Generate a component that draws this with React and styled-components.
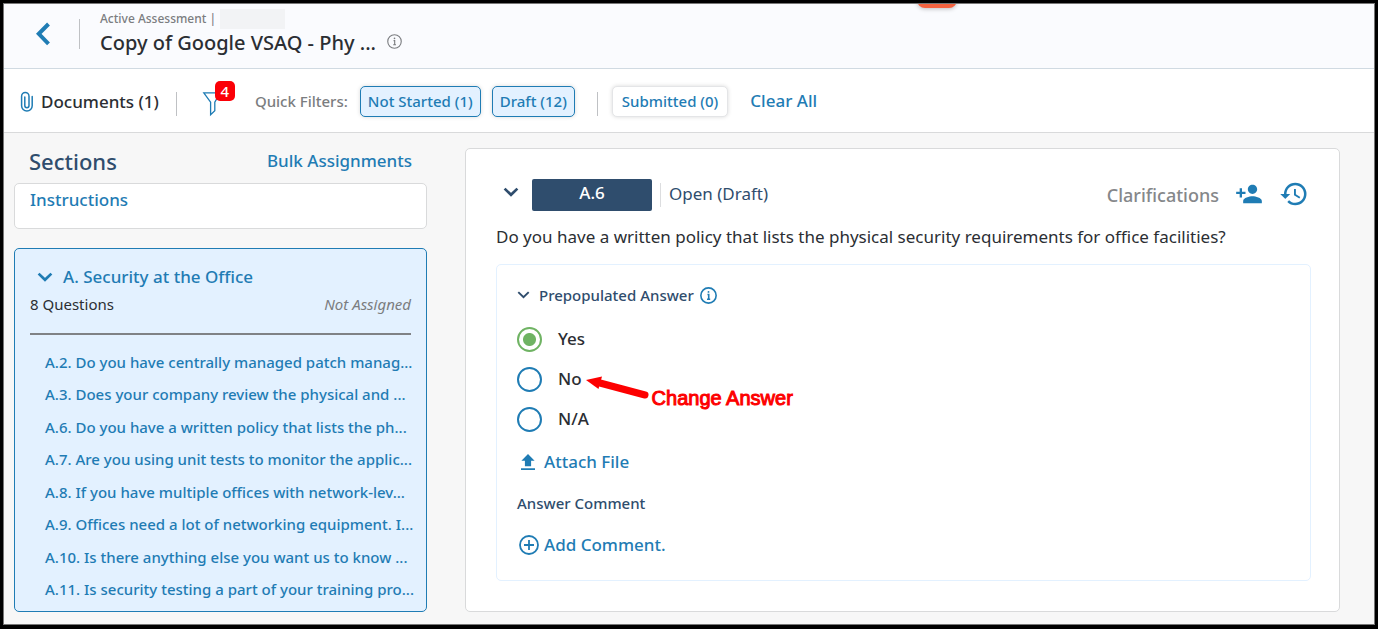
import { useState } from "react";
import { MdHistory, MdPersonAdd } from "react-icons/md";
import styled, { createGlobalStyle } from "styled-components";

const GlobalStyle = createGlobalStyle`
  :root {
    --color-link: #1f7cb4;
    --color-navy: #2f4d6d;
    --color-text: #2b2e33;
    --color-gray: #7b7d80;
    --color-line: #d9dadb;
    --color-selected: #e3f1ff;
  }

  * {
    box-sizing: border-box;
  }

  body {
    margin: 0;
    font-family: "Noto Sans", "Open Sans", sans-serif;
    color: var(--color-text);
  }

  h1, h2, h3, p, ul, fieldset {
    margin: 0;
    padding: 0;
    border: none;
  }

  button {
    font-family: inherit;
    margin: 0;
    padding: 0;
    border: none;
    background: none;
    cursor: pointer;
  }

  a {
    color: var(--color-link);
    text-decoration: none;
  }

  svg {
    display: block;
    flex: none;
    overflow: visible;
  }
`;

// Frame
const Frame = styled.div`
  min-height: 100vh;
  display: flex;
  border: 3px solid #000;
  border-bottom-width: 4px;
`;

const Page = styled.div`
  position: relative;
  flex: 1;
  min-width: 0;
  display: flex;
  flex-direction: column;
  border: 1px solid #777;
  background-color: #f7f7f7;
  overflow: hidden;
`;

const TopTab = styled.div`
  position: absolute;
  top: -16px;
  left: calc(67% - 5px);
  width: 40px;
  height: 20px;
  border-radius: 8px;
  background-color: #f4623f;
  box-shadow: 0 1px 4px rgba(0, 0, 0, 0.25);
`;

// Header
const Header = styled.header`
  display: flex;
  align-items: center;
  height: 65px;
  padding: 0 31px 4px;
  border-bottom: 1px solid #d0dae2;
  background-color: #fafbfe;
`;

const BackButton = styled.button`
  display: flex;
  color: var(--color-link);
`;

const Divider = styled.span`
  flex: none;
  width: 1px;
  height: ${({ $height }) => $height || 24}px;
  margin: ${({ $margin }) => $margin || "0"};
  background-color: ${({ $light }) => ($light ? "#dcdddf" : "#bfc1c4")};
`;

const Heading = styled.div`
  display: flex;
  flex-direction: column;
  padding-bottom: 2px;
`;

const Eyebrow = styled.div`
  display: flex;
  align-items: center;
  gap: 4px;
  height: 20px;
  font-size: 12px;
  line-height: 20px;
  font-weight: 500;
  color: var(--color-gray);
`;

const HiddenName = styled.span`
  width: 65px;
  height: 20px;
  background-color: #f2f3f5;
`;

const TitleRow = styled.div`
  display: flex;
  align-items: center;
  gap: 11px;
  color: var(--color-gray);

  svg {
    margin-bottom: 3px;
  }
`;

const Title = styled.h1`
  font-size: 20px;
  line-height: 28px;
  font-weight: 500;
  color: var(--color-text);
`;

// Toolbar
const Toolbar = styled.nav`
  display: flex;
  align-items: center;
  height: 64px;
  padding: 0 16px;
  border-bottom: 1px solid var(--color-line);
  background-color: #fff;
`;

const DocumentsButton = styled.button`
  display: flex;
  align-items: center;
  gap: 7px;
  padding-top: 2px;
  font-size: 17px;
  line-height: 24px;
  font-weight: 500;
  color: var(--color-text);
`;

const FilterButton = styled.button`
  position: relative;
  display: flex;
  margin-top: 5px;
  color: var(--color-link);
`;

const FilterCount = styled.span`
  position: absolute;
  top: -10px;
  left: 12px;
  width: 20px;
  height: 20px;
  border-radius: 5px;
  background-color: #fb0007;
  color: #fff;
  font-size: 15px;
  line-height: 20px;
  font-weight: 500;
  text-align: center;
`;

const FilterLabel = styled.span`
  margin: 0 12px 0 34px;
  font-size: 15px;
  font-weight: 500;
  color: var(--color-gray);
`;

const Chips = styled.div`
  display: flex;
  gap: 11px;
`;

const Chip = styled.button`
  height: 31px;
  margin-top: 2px;
  padding: ${({ $active }) => ($active ? "0 7px 1px" : "0 9px 1px")};
  border: 1px solid
    ${({ $active }) => ($active ? "var(--color-link)" : "#e4e5e7")};
  border-radius: 5px;
  background-color: ${({ $active }) =>
    $active ? "var(--color-selected)" : "#fff"};
  box-shadow: 0 0 4px rgba(0, 0, 0, 0.15);
  color: var(--color-link);
  font-size: 15px;
  font-weight: 500;
`;

const TextButton = styled.button`
  display: flex;
  align-items: center;
  gap: ${({ $gap }) => $gap || 0}px;
  font-size: 17px;
  line-height: 24px;
  font-weight: 500;
  color: var(--color-link);
`;

const ClearButton = styled(TextButton)`
  margin-left: 22px;
`;

// Body
const Body = styled.div`
  flex: 1;
  display: flex;
  gap: 38px;
  padding: 15px 34px 12px 10px;
`;

const Sidebar = styled.aside`
  flex: none;
  width: 413px;
  display: flex;
  flex-direction: column;
`;

const SidebarHeader = styled.div`
  display: flex;
  align-items: center;
  justify-content: space-between;
  height: 35px;
  padding: 0 15px 10px;
`;

const SidebarTitle = styled.h2`
  font-size: 22px;
  line-height: 28px;
  font-weight: 500;
  color: var(--color-navy);
`;

const InstructionsCard = styled.div`
  height: 46px;
  padding: 4px 15px;
  border: 1px solid var(--color-line);
  border-radius: 5px;
  background-color: #fff;
  font-size: 17px;
  line-height: 24px;
  font-weight: 500;
`;

const SectionCard = styled.section`
  flex: 1;
  display: flex;
  flex-direction: column;
  margin-top: 19px;
  padding: 16px 11px 11px 15px;
  border: 1px solid var(--color-link);
  border-radius: 5px;
  background-color: var(--color-selected);
`;

const SectionToggle = styled(TextButton)`
  padding-left: 7px;
`;

const SectionMeta = styled.div`
  display: flex;
  justify-content: space-between;
  margin: 3px 4px 0 0;
  padding-bottom: 17px;
  border-bottom: 2px solid #808285;
  font-size: 15px;
  line-height: 24px;
`;

const Assignee = styled.em`
  color: var(--color-gray);
`;

const QuestionList = styled.ul`
  flex: 1;
  display: flex;
  flex-direction: column;
  justify-content: space-between;
  margin-top: 16px;
  padding-left: 15px;
  list-style: none;
  font-size: 15px;
  line-height: 22px;
  font-weight: 500;
  white-space: nowrap;
`;

// Question panel
const Panel = styled.main`
  flex: 1;
  min-width: 0;
  padding: 30px 28px 30px 30px;
  border: 1px solid var(--color-line);
  border-radius: 5px;
  background-color: #fff;
`;

const PanelHeader = styled.div`
  display: flex;
  align-items: center;
  height: 32px;
`;

const IconButton = styled.button`
  display: flex;
  margin: ${({ $margin }) => $margin || "0"};
  color: ${({ $navy }) => ($navy ? "var(--color-navy)" : "var(--color-link)")};
`;

const QuestionBadge = styled.span`
  width: 120px;
  height: 32px;
  border-radius: 2px;
  background-color: var(--color-navy);
  color: #fff;
  font-size: 17px;
  line-height: 28px;
  font-weight: 500;
  text-align: center;
`;

const Status = styled.span`
  padding-bottom: 3px;
  font-size: 17px;
  color: var(--color-navy);
`;

const Clarifications = styled.span`
  margin-left: auto;
  font-size: 18px;
  font-weight: 500;
  color: #85878a;
`;

const QuestionText = styled.p`
  margin-top: 14px;
  font-size: 17px;
  line-height: 24px;
`;

const AnswerBox = styled.section`
  margin-top: 15px;
  padding: 20px 20px 23px;
  border: 1px solid var(--color-selected);
  border-radius: 5px;
`;

const AnswerHeader = styled.h3`
  display: flex;
  align-items: center;
  gap: 6px;
  font-size: 15px;
  line-height: 20px;
  font-weight: 500;
  color: var(--color-navy);
`;

const Options = styled.fieldset`
  margin: 14px 0 11px;
`;

const Option = styled.div`
  position: relative;
  width: max-content;

  label {
    display: flex;
    align-items: center;
    gap: 16px;
    height: 40px;
    font-size: 17px;
    font-weight: 500;
  }

  label span {
    padding-bottom: 2px;
  }
`;

const Radio = styled.input`
  appearance: none;
  width: 25px;
  height: 25px;
  margin: 0;
  border: 2px solid var(--color-link);
  border-radius: 50%;
  background-color: #fff;

  &:checked {
    border-color: #6fb363;
    background: radial-gradient(circle, #6fb363 6px, #fff 7px);
  }
`;

const Callout = styled.div`
  position: absolute;
  top: 19px;
  left: calc(100% + 4px);
  display: flex;
  gap: 3px;
  color: #fd0000;
  font-family: "Liberation Sans", Arial, sans-serif;
  font-size: 20px;
  line-height: 40px;
  white-space: nowrap;
  -webkit-text-stroke: 1px #fd0000;
`;

const CommentTitle = styled.h3`
  margin: 19px 0 20px;
  font-size: 15px;
  line-height: 20px;
  font-weight: 500;
  color: var(--color-navy);
`;

function ChevronDown({ width = 16, stroke = 2.7 }) {
  return (
    <svg width={width} height={width * 0.75} viewBox="0 0 16 12" fill="none">
      <path d="M1.6 2.6 8 8.8l6.4-6.2" stroke="currentColor" strokeWidth={stroke} />
    </svg>
  );
}

function InfoIcon({ size = 15, stroke = 1.2 }) {
  return (
    <svg width={size} height={size} viewBox="0 0 16 16" fill="none">
      <circle cx="8" cy="8" r="7.2" stroke="currentColor" strokeWidth={stroke} />
      <path
        d="M7 7h1.2v4.5M6.600 11.500h3"
        stroke="currentColor"
        strokeWidth={stroke}
      />
      <circle cx="8" cy="4.6" r="0.9" fill="currentColor" />
    </svg>
  );
}

const questions = [
  "A.2. Do you have centrally managed patch manag...",
  "A.3. Does your company review the physical and ...",
  "A.6. Do you have a written policy that lists the ph...",
  "A.7. Are you using unit tests to monitor the applic...",
  "A.8. If you have multiple offices with network-lev...",
  "A.9. Offices need a lot of networking equipment. I...",
  "A.10. Is there anything else you want us to know ...",
  "A.11. Is security testing a part of your training pro...",
];

const options = ["Yes", "No", "N/A"];

function AssessmentHeader() {
  return (
    <Header>
      <BackButton aria-label="Back">
        <svg width="16" height="24" viewBox="0 0 16 24" fill="none">
          <path d="M13.5 2 3.8 11.8l9.7 10" stroke="currentColor" strokeWidth="4" />
        </svg>
      </BackButton>
      <Divider $height={30} $margin="0 20px 0 28px" />
      <Heading>
        <Eyebrow>
          Active Assessment | <HiddenName />
        </Eyebrow>
        <TitleRow>
          <Title>Copy of Google VSAQ - Phy ...</Title>
          <InfoIcon />
        </TitleRow>
      </Heading>
    </Header>
  );
}

function FilterBar() {
  return (
    <Toolbar>
      <DocumentsButton>
        <svg width="14" height="22" viewBox="0 0 14 22" fill="none">
          <path
            d="M4.8 6v8.6a2 2 0 0 0 4.2 0V5.2a3.7 3.7 0 0 0-7.4 0v9.6a5.2 5.2 0 0 0 10.6 0V5.5"
            stroke="var(--color-link)"
            strokeWidth="1.5"
            strokeLinecap="round"
          />
        </svg>
        Documents (1)
      </DocumentsButton>
      <Divider $margin="6px 26px 0 17px" />
      <FilterButton aria-label="Filters, 4 applied">
        <svg width="18" height="25" viewBox="0 0 18 25" fill="none">
          <path
            d="M.8 1.8h16.4l-5.4 9.4v8.6l-4.2 4V11.200z"
            stroke="currentColor"
            strokeWidth="1.3"
          />
        </svg>
        <FilterCount>4</FilterCount>
      </FilterButton>
      <FilterLabel>Quick Filters:</FilterLabel>
      <Chips>
        <Chip $active>Not Started (1)</Chip>
        <Chip $active>Draft (12)</Chip>
      </Chips>
      <Divider $margin="6px 14px 0 22px" />
      <Chip>Submitted (0)</Chip>
      <ClearButton>Clear All</ClearButton>
    </Toolbar>
  );
}

function Sections() {
  return (
    <Sidebar>
      <SidebarHeader>
        <SidebarTitle>Sections</SidebarTitle>
        <TextButton>Bulk Assignments</TextButton>
      </SidebarHeader>
      <InstructionsCard>
        <a href="#instructions">Instructions</a>
      </InstructionsCard>
      <SectionCard>
        <SectionToggle $gap={10}>
          <ChevronDown />
          A. Security at the Office
        </SectionToggle>
        <SectionMeta>
          <span>8 Questions</span>
          <Assignee>Not Assigned</Assignee>
        </SectionMeta>
        <QuestionList>
          {questions.map((question) => (
            <li key={question}>
              <a href="#question">{question}</a>
            </li>
          ))}
        </QuestionList>
      </SectionCard>
    </Sidebar>
  );
}

function Question() {
  const [answer, setAnswer] = useState("Yes");

  return (
    <Panel>
      <PanelHeader>
        <IconButton $navy $margin="0 13px 6px 7px" aria-label="Collapse question">
          <ChevronDown />
        </IconButton>
        <QuestionBadge>A.6</QuestionBadge>
        <Divider $light $margin="0 8px" />
        <Status>Open (Draft)</Status>
        <Clarifications>Clarifications</Clarifications>
        <IconButton $margin="0 16px 2px 16px" aria-label="Assign">
          <MdPersonAdd size={28} />
        </IconButton>
        <IconButton $margin="0 2px 2px 0" aria-label="History">
          <MdHistory size={30} />
        </IconButton>
      </PanelHeader>
      <QuestionText>
        Do you have a written policy that lists the physical security
        requirements for office facilities?
      </QuestionText>
      <AnswerBox>
        <AnswerHeader>
          <IconButton $navy $margin="0 3px 0 0" aria-label="Collapse answer">
            <ChevronDown width={13} stroke={2.4} />
          </IconButton>
          Prepopulated Answer
          <IconButton aria-label="About this answer">
            <InfoIcon size={17} stroke={1.5} />
          </IconButton>
        </AnswerHeader>
        <Options aria-label="Answer">
          {options.map((option) => (
            <Option key={option}>
              <label>
                <Radio
                  type="radio"
                  name="answer"
                  value={option}
                  checked={answer === option}
                  onChange={() => setAnswer(option)}
                />
                <span>{option}</span>
              </label>
              {option === "No" && (
                <Callout>
                  <svg width="63" height="24" viewBox="0 0 63 24" fill="#fd0000">
                    <path d="M0 2 16-1.5 12.5 11z" />
                    <path
                      d="M14 5l45 12"
                      stroke="#fd0000"
                      strokeWidth="7"
                      strokeLinecap="round"
                    />
                  </svg>
                  Change Answer
                </Callout>
              )}
            </Option>
          ))}
        </Options>
        <TextButton $gap={7}>
          <svg width="20" height="16" viewBox="0 0 20 16" fill="currentColor">
            <path d="M11 0 4.4 6.7h3.5v5.5h6.2V6.7h3.5zM4 14.3h14V16H4z" />
          </svg>
          Attach File
        </TextButton>
        <CommentTitle>Answer Comment</CommentTitle>
        <TextButton $gap={5}>
          <svg width="22" height="20" viewBox="0 0 22 20" fill="none">
            <path d="M12 5v10M7 10h10" stroke="currentColor" strokeWidth="1.8" />
            <circle cx="12" cy="10" r="9" stroke="currentColor" strokeWidth="1.8" />
          </svg>
          Add Comment.
        </TextButton>
      </AnswerBox>
    </Panel>
  );
}

function App() {
  return (
    <Frame>
      <GlobalStyle />
      <Page>
        <AssessmentHeader />
        <TopTab />
        <FilterBar />
        <Body>
          <Sections />
          <Question />
        </Body>
      </Page>
    </Frame>
  );
}

export default App;
